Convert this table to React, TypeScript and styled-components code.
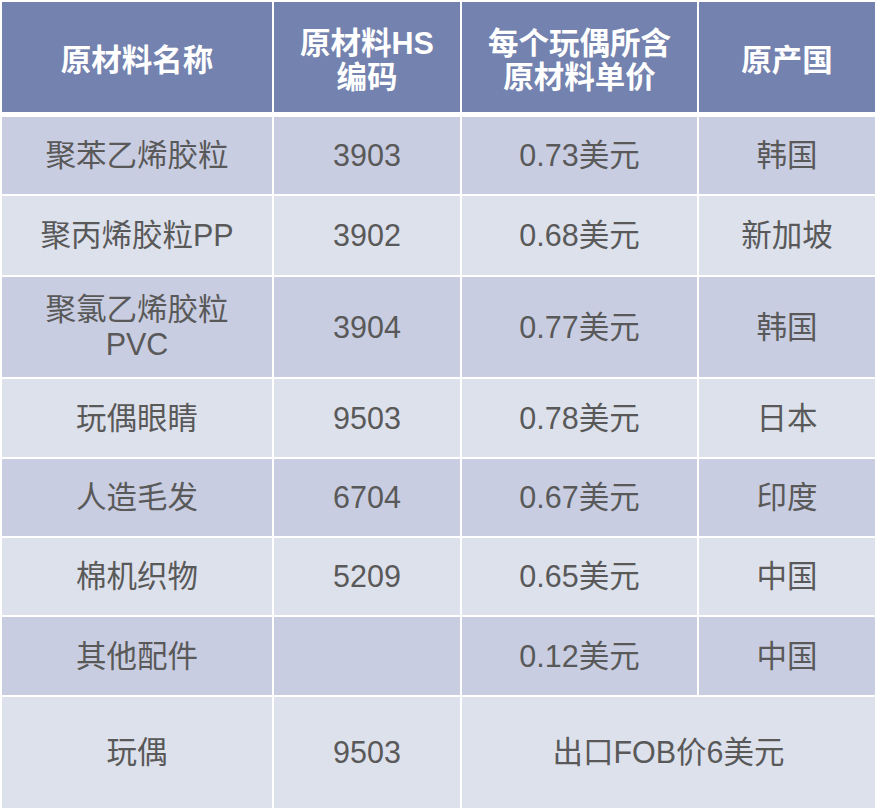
import React from "react";
import styled, { createGlobalStyle } from "styled-components";

const GlobalStyle = createGlobalStyle`
  html, body { margin: 0; padding: 0; background: #ffffff; }
  body { font-family: "Liberation Sans", "Noto Sans CJK SC", sans-serif; }
`;

const Page = styled.div`
  padding: 2px 0 0 2px;
`;

const Table = styled.div`
  display: flex;
  flex-direction: column;
  gap: 5px;
  width: 873px;
`;

const cols = "270px 186px 235px 176px";

const Head = styled.div`
  display: grid;
  grid-template-columns: ${cols};
  column-gap: 2px;
  height: 110px;
`;

const Body = styled.div`
  display: grid;
  grid-template-columns: ${cols};
  grid-template-rows: 77px 79px 100px 78px 77px 77px 78px 111px;
  gap: 2px;
`;

const HeadCell = styled.div`
  background: #7382ae;
  color: #ffffff;
  font-weight: 700;
  font-size: 30.5px;
  line-height: 34px;
  display: flex;
  align-items: center;
  justify-content: center;
  text-align: center;
  padding-top: 6px;
`;

const Cell = styled.div<{ $dark: boolean; $span?: number }>`
  background: ${(p) => (p.$dark ? "#c9cde1" : "#dde1ec")};
  color: #595959;
  font-size: 30.5px;
  line-height: 35px;
  display: flex;
  align-items: center;
  justify-content: center;
  text-align: center;
  grid-column: ${(p) => (p.$span ? `span ${p.$span}` : "auto")};
`;

const rows: string[][] = [
  ["聚苯乙烯胶粒", "3903", "0.73美元", "韩国"],
  ["聚丙烯胶粒PP", "3902", "0.68美元", "新加坡"],
  ["聚氯乙烯胶粒\nPVC", "3904", "0.77美元", "韩国"],
  ["玩偶眼睛", "9503", "0.78美元", "日本"],
  ["人造毛发", "6704", "0.67美元", "印度"],
  ["棉机织物", "5209", "0.65美元", "中国"],
  ["其他配件", "", "0.12美元", "中国"],
];

const Lines: React.FC<{ text: string }> = ({ text }) => (
  <span>
    {text.split("\n").map((t, i) => (
      <React.Fragment key={i}>
        {i > 0 && <br />}
        {t}
      </React.Fragment>
    ))}
  </span>
);

export default function App() {
  return (
    <Page>
      <GlobalStyle />
      <Table>
        <Head>
          <HeadCell>原材料名称</HeadCell>
          <HeadCell>
            <Lines text={"原材料HS\n编码"} />
          </HeadCell>
          <HeadCell>
            <Lines text={"每个玩偶所含\n原材料单价"} />
          </HeadCell>
          <HeadCell>原产国</HeadCell>
        </Head>
        <Body>
          {rows.map((r, i) =>
            r.map((c, j) => (
              <Cell key={`${i}-${j}`} $dark={i % 2 === 0}>
                <Lines text={c} />
              </Cell>
            ))
          )}
          <Cell $dark={false}>玩偶</Cell>
          <Cell $dark={false}>9503</Cell>
          <Cell $dark={false} $span={2}>
            出口FOB价6美元
          </Cell>
        </Body>
      </Table>
    </Page>
  );
}
